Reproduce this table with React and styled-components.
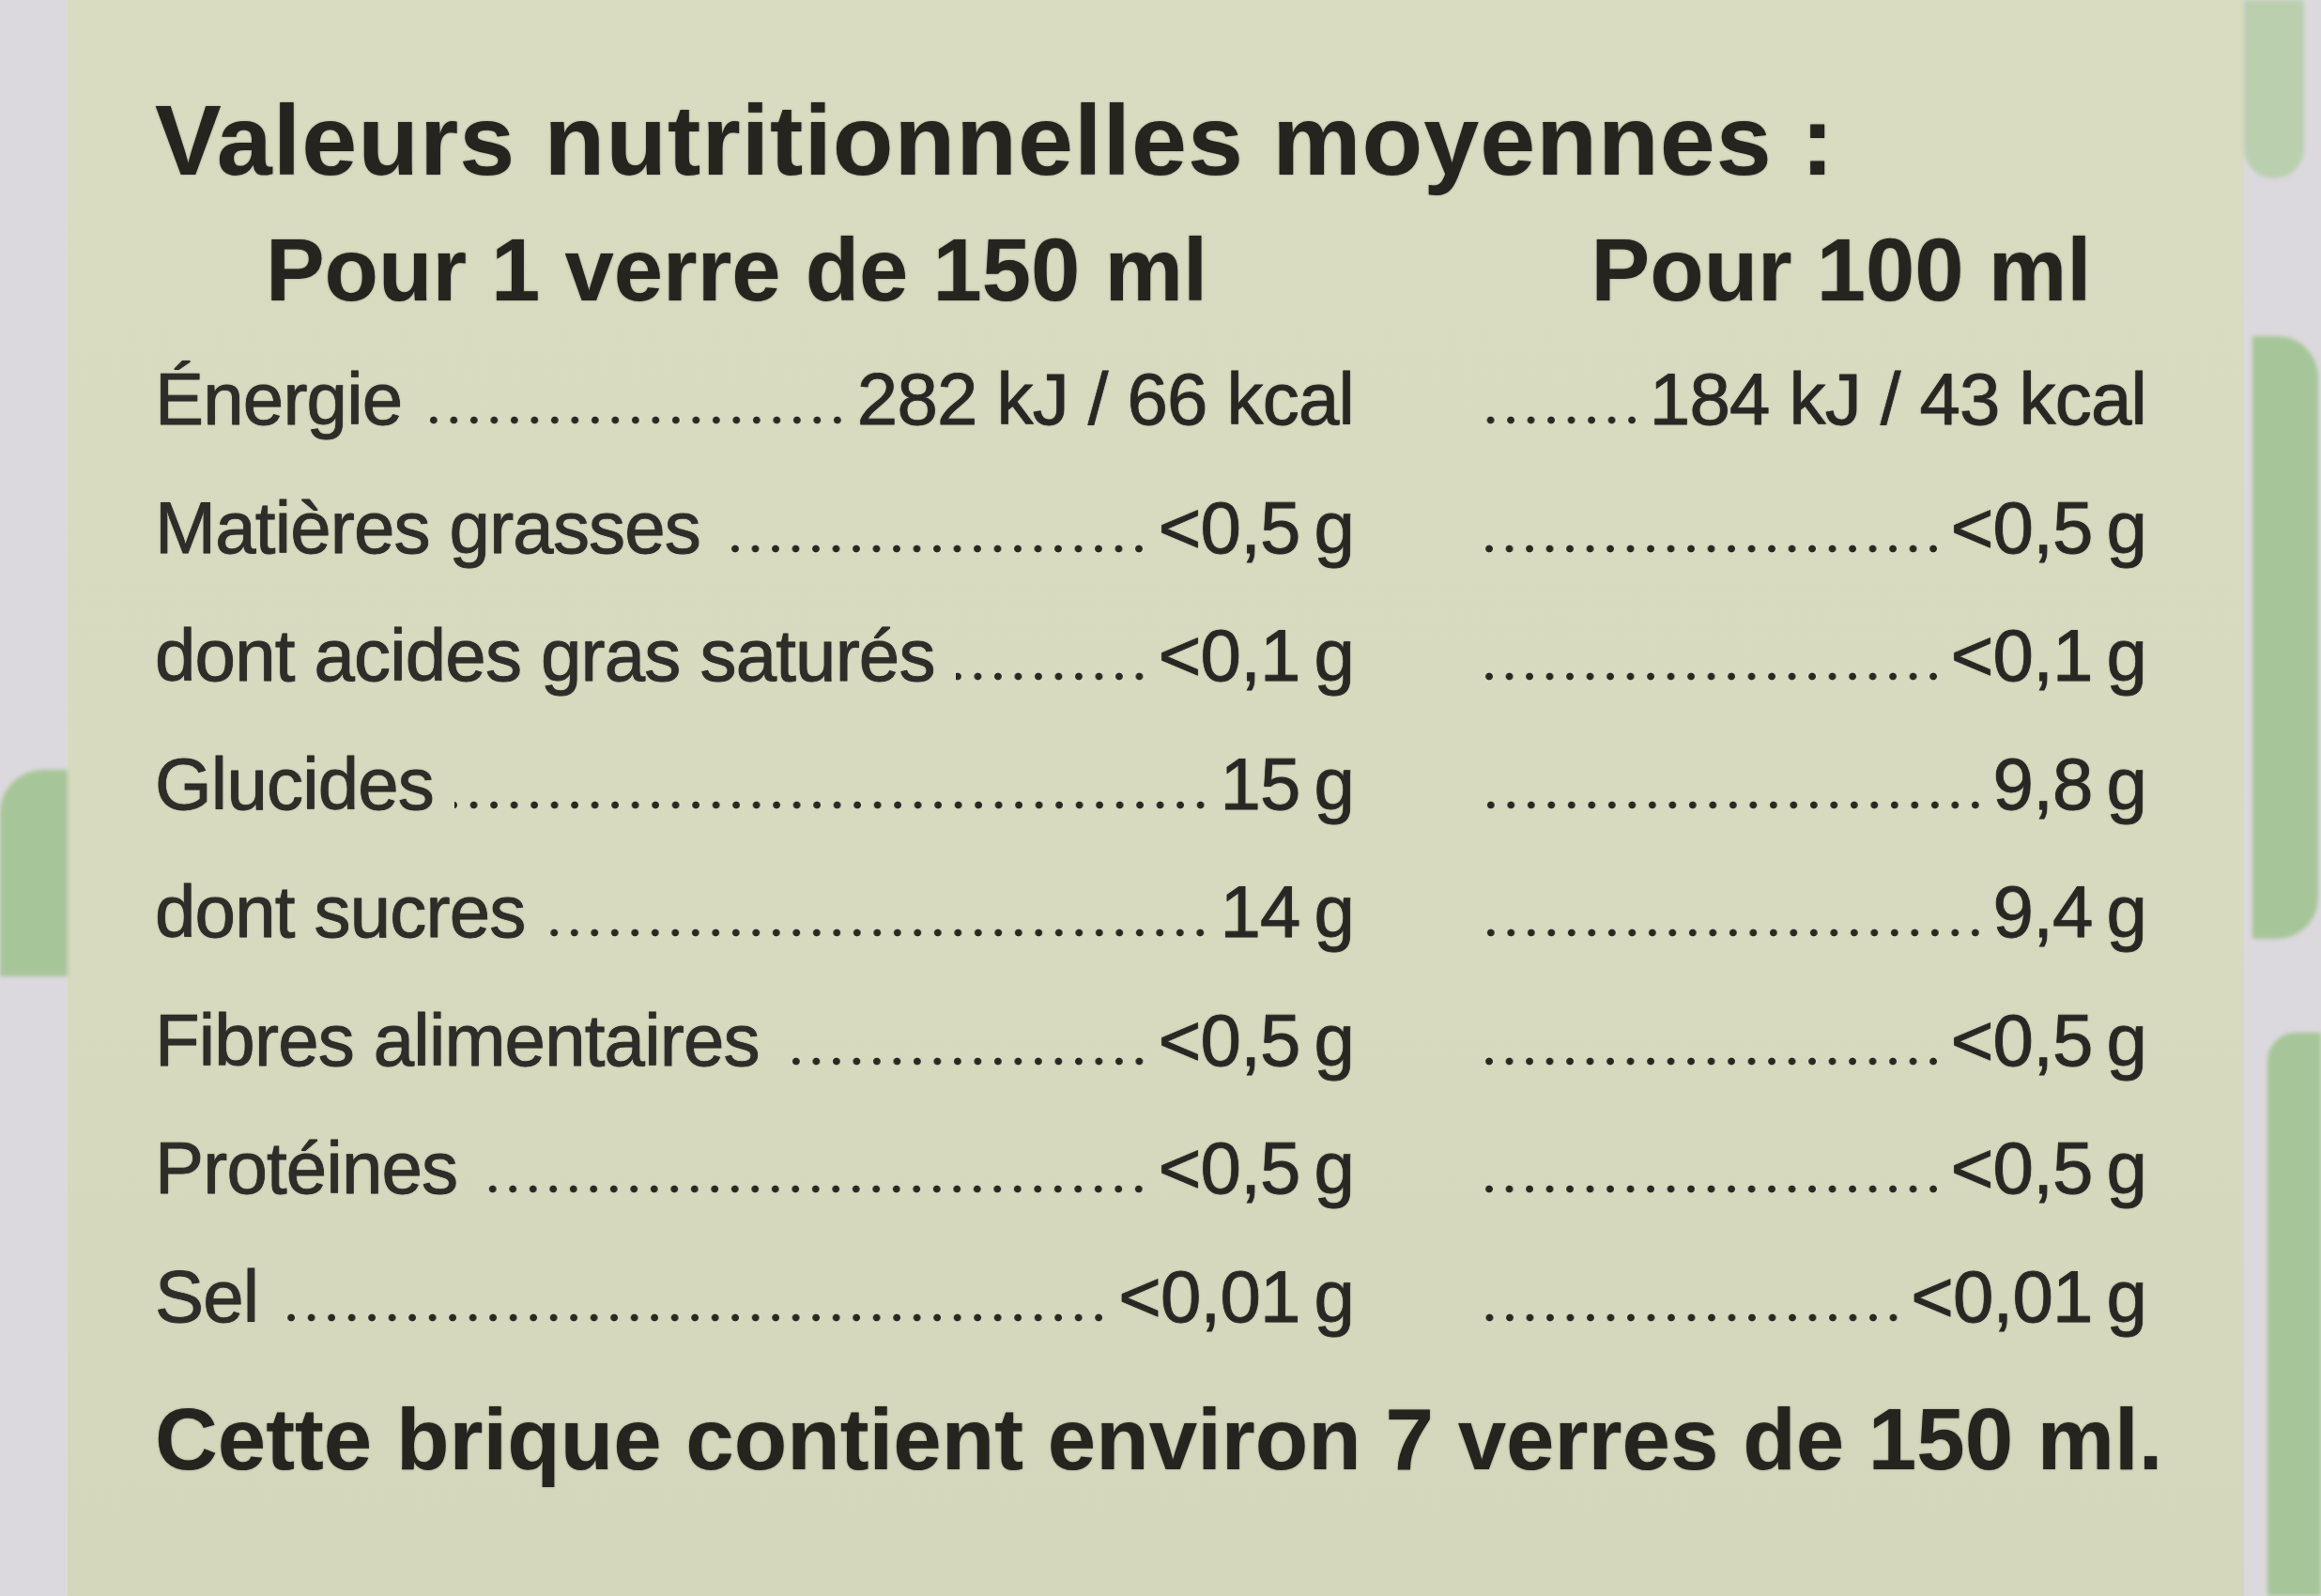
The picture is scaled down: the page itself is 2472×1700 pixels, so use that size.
import React from 'react';
import styled, { createGlobalStyle } from 'styled-components';

const GlobalStyle = createGlobalStyle`
  html, body {
    margin: 0;
    padding: 0;
    background: #dcd9de;
    overflow: hidden;
  }
  #root {
    width: 2472px;
    height: 1700px;
  }
`;

const Page = styled.div`
  display: flex;
  width: 2472px;
  height: 1700px;
  background: #dcd9de;
  font-family: "Liberation Sans", Arial, sans-serif;
  color: #2a2925;
`;

const LeftEdge = styled.div`
  width: 72px;
  flex-shrink: 0;
  padding-top: 820px;
  box-sizing: border-box;
`;

const GreenPatch = styled.div`
  height: ${p => p.$h}px;
  margin-left: ${p => p.$ml || 0}px;
  margin-top: ${p => p.$mt || 0}px;
  width: ${p => (p.$w ? `${p.$w}px` : 'auto')};
  background: ${p => p.$light ? '#b9cfae' : '#a6c598'};
  border-radius: ${p => p.$radius || '0'};
  filter: blur(2px);
`;

const Panel = styled.main`
  width: 2318px;
  flex-shrink: 0;
  box-sizing: border-box;
  padding: 80px 0 0 93px;
  background: linear-gradient(180deg, #dadcc2 0%, #d7dabe 55%, #d4d7bb 100%);
  text-shadow: 0 0 2px rgba(42, 41, 37, 0.5);
`;

const RightEdge = styled.div`
  flex: 1;
  display: flex;
  flex-direction: column;
`;

const Title = styled.h1`
  margin: 0 0 4px;
  font-size: 106px;
  line-height: 139px;
  font-weight: 700;
  letter-spacing: 1px;
  color: #25241f;
`;

const Table = styled.div`
  display: grid;
  grid-template-columns: 1277px 710px;
  column-gap: 134px;
`;

const ColHead = styled.div`
  font-size: 94px;
  line-height: 130px;
  font-weight: 700;
  color: #25241f;
  white-space: nowrap;
  text-align: center;
  padding-left: ${p => p.$padLeft || 0}px;
  padding-right: ${p => p.$padRight || 0}px;
  margin-bottom: 4px;
`;

const Cell = styled.div`
  display: flex;
  align-items: baseline;
  font-size: 78px;
  line-height: 136.5px;
  white-space: nowrap;
  letter-spacing: -0.8px;
  -webkit-text-stroke: 0.8px #2c2a26;
`;

const Label = styled.span`
  color: #2e2d29;
`;

const Leader = styled.span`
  flex: 1;
  height: 9px;
  margin: 0 ${p => p.$after ?? 10}px 0 ${p => p.$before ?? 22}px;
  background-image: radial-gradient(circle, #2a2824 0 3.4px, transparent 4.3px);
  background-size: 21.5px 9px;
  background-repeat: repeat-x;
  background-position: right bottom;
`;

const Value = styled.span`
  color: #292723;
`;

const Footer = styled.p`
  margin: 19px 0 0;
  font-size: 92.5px;
  line-height: 130px;
  font-weight: 700;
  color: #25241f;
  white-space: nowrap;
`;

const ts = '\u2009';

const rows = [
  ['Énergie', '282 kJ / 66 kcal', '184 kJ / 43 kcal'],
  ['Matières grasses', `<0,5${ts}g`, `<0,5${ts}g`],
  ['dont acides gras saturés', `<0,1${ts}g`, `<0,1${ts}g`],
  ['Glucides', `15${ts}g`, `9,8${ts}g`],
  ['dont sucres', `14${ts}g`, `9,4${ts}g`],
  ['Fibres alimentaires', `<0,5${ts}g`, `<0,5${ts}g`],
  ['Protéines', `<0,5${ts}g`, `<0,5${ts}g`],
  ['Sel', `<0,01${ts}g`, `<0,01${ts}g`],
];

export default function App() {
  return (
    <>
      <GlobalStyle />
      <Page>
        <LeftEdge>
          <GreenPatch $h={220} $radius="46px 0 0 0" />
        </LeftEdge>
        <Panel>
          <Title>Valeurs nutritionnelles moyennes :</Title>
          <Table>
            <ColHead $padRight={38}>Pour 1 verre de 150 ml</ColHead>
            <ColHead $padLeft={60}>Pour 100 ml</ColHead>
            {rows.map(([label, v1, v2]) => (
              <React.Fragment key={label}>
                <Cell>
                  <Label>{label}</Label>
                  <Leader />
                  <Value>{v1}</Value>
                </Cell>
                <Cell>
                  <Leader $before={0} $after={8} />
                  <Value>{v2}</Value>
                </Cell>
              </React.Fragment>
            ))}
          </Table>
          <Footer>Cette brique contient environ 7 verres de 150 ml.</Footer>
        </Panel>
        <RightEdge>
          <GreenPatch $h={190} $w={64} $light $radius="0 0 40px 40px" />
          <GreenPatch $h={642} $mt={168} $ml={9} $w={70} $radius="0 44px 44px 0" />
          <GreenPatch $h={600} $mt={100} $ml={25} $radius="30px 0 0 0" />
        </RightEdge>
      </Page>
    </>
  );
}
